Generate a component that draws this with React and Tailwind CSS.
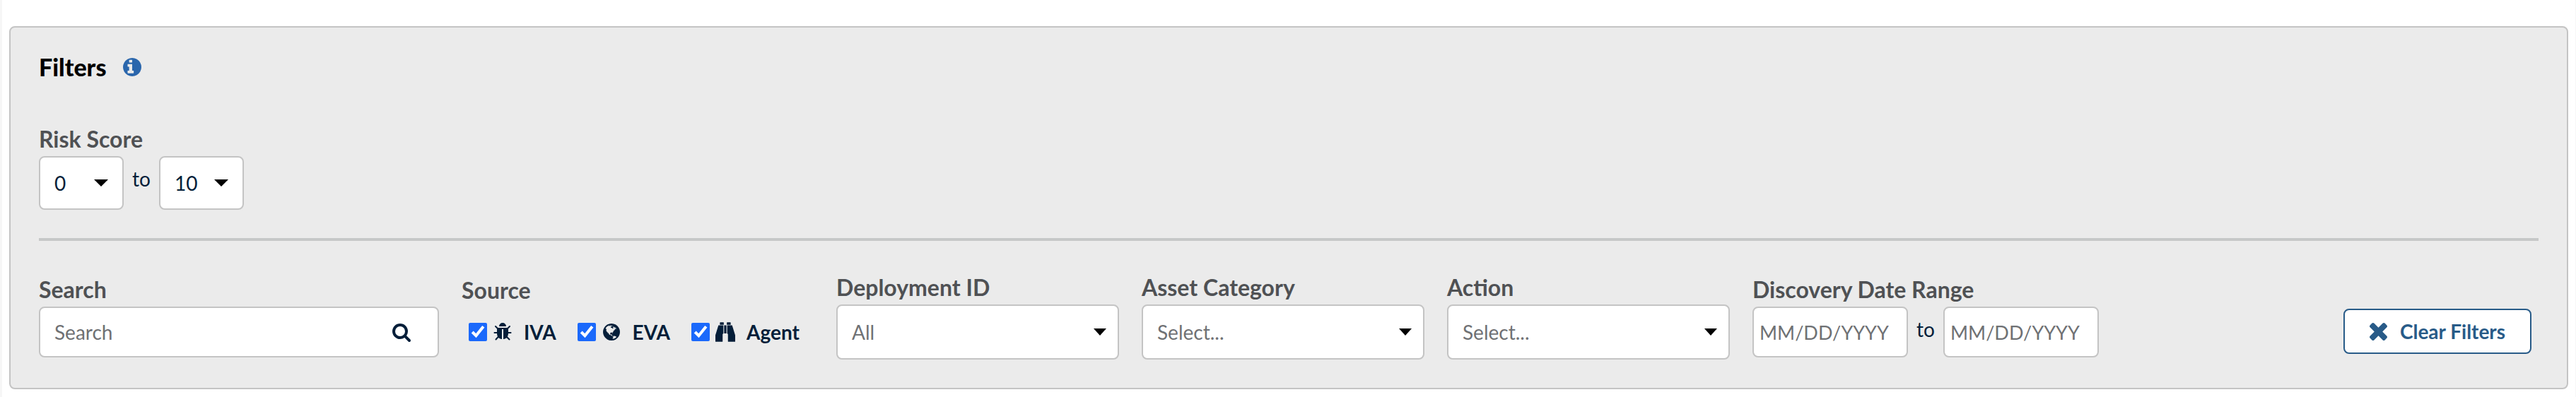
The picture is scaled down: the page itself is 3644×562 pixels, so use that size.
import React, { useState } from 'react';

const icons = {
  info: 'M1024 1376v-160q0-14-9-23t-23-9h-96v-512q0-14-9-23t-23-9h-320q-14 0-23 9t-9 23v160q0 14 9 23t23 9h96v320h-96q-14 0-23 9t-9 23v160q0 14 9 23t23 9h448q14 0 23-9t9-23zM896 480v-160q0-14-9-23t-23-9h-192q-14 0-23 9t-9 23v160q0 14 9 23t23 9h192q14 0 23-9t9-23zM1664 896q0 209-103 385.5t-279.5 279.5-385.5 103-385.5-103-279.5-279.5-103-385.5 103-385.5 279.5-279.5 385.5-103 385.5 103 279.5 279.5 103 385.5z',
  times: 'M1490 1322q0 40-28 68l-136 136q-28 28-68 28t-68-28l-294-294-294 294q-28 28-68 28t-68-28l-136-136q-28-28-28-68t28-68l294-294-294-294q-28-28-28-68t28-68l136-136q28-28 68-28t68 28l294 294 294-294q28-28 68-28t68 28l136 136q28 28 28 68t-28 68l-294 294 294 294q28 28 28 68z',
  search: 'M1216 832q0-185-131.5-316.5t-316.5-131.5-316.5 131.5-131.5 316.5 131.5 316.5 316.5 131.5 316.5-131.5 131.5-316.5zm512 832q0 52-38 90t-90 38q-54 0-90-38l-343-342q-179 124-399 124-143 0-273.5-55.5t-225-150-150-225-55.5-273.5 55.5-273.5 150-225 225-150 273.5-55.5 273.5 55.5 225 150 150 225 55.5 273.5q0 220-124 399l343 343q37 37 37 90z',
  bug: 'M1696 960q0 26-19 45t-45 19h-224q0 171-67 290l208 209q19 19 19 45t-19 45q-18 19-45 19t-45-19l-198-197q-5 5-15 13t-42 28.5-65 36.5-82 29-97 13v-896h-128v896q-51 0-101.5-13.5t-87-33-66-39-43.5-32.5l-15-14-183 207q-20 21-48 21-24 0-43-16-19-18-20.5-44.5t15.5-46.5l202-227q-58-114-58-274h-224q-26 0-45-19t-19-45 19-45 45-19h224v-294l-173-173q-19-19-19-45t19-45 45-19 45 19l173 173h844l173-173q19-19 45-19t45 19 19 45-19 45l-173 173v294h224q26 0 45 19t19 45zm-480-576h-640q0-133 93.5-226.5t226.5-93.5 226.5 93.5 93.5 226.5z',
  globe: 'M896 128q209 0 385.5 103t279.5 279.5 103 385.5-103 385.5-279.5 279.5-385.5 103-385.5-103-279.5-279.5-103-385.5 103-385.5 279.5-279.5 385.5-103zm274 521q-2 1-9.5 9.5t-13.5 9.5q2 0 4.5-5t5-11 3.5-7q6-7 22-15 14-6 52-12 34-8 51 11-2-2 9.5-13t14.5-12q3-2 15-4.5t15-7.5l2-22q-12 1-17.5-7t-6.5-21q0 2-6 8 0-7-4.5-8t-11.5 1-9 1q-10-3-15-7.5t-8-16.5-4-15q-2-5-9.5-11t-9.5-10q-1-2-2.5-5.5t-3-6.5-4-5.5-5.5-2.5-7 5-7.5 10-4.5 5q-3-2-6-1.5t-4.5 1-4.5 3-5 3.5q-3 2-8.5 3t-8.5 2q15-5-1-11-10-4-16-3 9-4 7.5-12t-8.5-14h5q-1-4-8.5-8.5t-17.5-8.5-13-6q-8-5-34-9.5t-33-.5q-5 6-4.5 10.5t4 14 3.5 12.5q1 6-5.5 13t-6.5 12q0 7 14 15.5t10 21.5q-3 8-16 16t-16 12q-5 8-1.5 18.5t10.5 16.5q2 2 1.5 4t-3.5 4.5-5.5 4-6.5 3.5l-3 2q-11 5-20.5-6t-13.5-26q-7-25-16-30-23-8-29 1-5-13-41-26-25-9-58-4 6-1 0-15-7-15-19-12 3-6 4-17.5t1-13.5q3-13 12-23 1-1 7-8.5t9.5-13.5.5-6q35 4 50-11 5-5 11.5-17t10.5-17q9-6 14-5.5t14.5 5.5 14.5 5q14 1 15.5-11t-7.5-20q12 1 3-17-4-7-8-9-12-4-27 5-8 4 2 8-1-1-9.5 10.5t-16.5 17.5-16-5q-1-1-5.5-13.5t-9.5-13.5q-8 0-16 15 3-8-11-15t-24-8q19-12-8-27-7-4-20.5-5t-19.5 4q-5 7-5.5 11.5t5 8 10.5 5.5 11.5 4 8.5 3q14 10 8 14-2 1-8.5 3.5t-11.5 4.5-6 4q-3 4 0 14t-2 14q-5-5-9-17.5t-7-16.5q7 9-25 6l-10-1q-4 0-16 2t-20.5 1-13.5-8q-4-8 0-20 1-4 4-2-4-3-11-9.5t-10-8.5q-46 15-94 41 6 1 12-1 5-2 13-6.5t10-5.5q34-14 42-7l5-5q14 16 20 25-7-4-30-1-20 6-22 12 7 12 5 18-4-3-11.5-10t-14.5-11-15-5q-16 0-22 1-146 80-235 222 7 7 12 8 4 1 5 9t2.5 11 11.5-3q9 8 3 19 1-1 44 27 19 17 21 21 3 11-10 18-1-2-9-9t-9-4q-3 5 .5 18.5t10.5 12.5q-7 0-9.5 16t-2.5 35.5-1 23.5l2 1q-3 12 5.5 34.5t21.5 19.5q-13 3 20 43 6 8 8 9 3 2 12 7.5t15 10 10 10.5q4 5 10 22.5t14 23.5q-2 6 9.5 20t10.5 23q-1 0-2.5 1t-2.5 1q3 7 15.5 14t15.5 13q1 3 2 10t3 11 8 2q2-20-24-62-15-25-17-29-3-5-5.5-15.5t-4.5-14.5q2 0 6 1.5t8.5 3.5 7.5 4 2 3q-3 7 2 17.5t12 18.5 17 19 12 13q6 6 14 19.5t0 13.5q9 0 20 10.5t17 19.5q5 8 8 26t5 24q2 7 8.5 13.5t12.5 9.5l16 8 13 7q5 2 18.5 10.5t21.5 11.5q10 4 16 4t14.5-2.5 13.5-3.5q15-2 29 15t21 21q36 19 55 11-2 1 .5 7.5t8 15.5 9 14.5 5.5 8.5q5 6 18 15t18 15q6-4 7-9-3 8 7 20t18 10q14-3 14-32-31 15-49-18 0-1-2.5-5.5t-4-8.5-2.5-8.5 0-7.5 5-3q9 0 10-3.5t-2-12.5-4-13q-1-8-11-20t-12-15q-5 9-16 8t-16-9q0 1-1.5 5.5t-1.5 6.5q-13 0-15-1 1-3 2.5-17.5t3.5-22.5q1-4 5.5-12t7.5-14.5 4-12.5-4.5-9.5-17.5-2.5q-19 1-26 20-1 3-3 10.5t-5 11.5-9 7q-7 3-24 2t-24-5q-13-8-22.5-29t-9.5-37q0-10 2.5-26.5t3-25-5.5-24.5q3-2 9-9.5t10-10.5q2-1 4.5-1.5t4.5 0 4-1.5 3-6q-1-1-4-3-3-3-4-3 7 3 28.5-1.5t27.5 1.5q15 11 22-2 0-1-2.5-9.5t-.5-13.5q5 27 29 9 3 3 15.5 5t17.5 5q3 2 7 5.5t5.5 4.5 5-.5 8.5-6.5q10 14 12 24 11 40 19 44 7 3 11 2t4.5-9.5 0-14-1.5-12.5l-1-8v-18l-1-8q-15-3-18.5-12t1.5-18.5 15-18.5q1-1 8-3.5t15.5-6.5 12.5-8q21-19 15-35 7 0 11-9-1 0-5-3t-7.5-5-4.5-2q9-5 2-16 5-3 7.5-11t7.5-10q9 12 21 2 7-8 1-16 5-7 20.5-10.5t18.5-9.5q7 2 8-2t1-12 3-12q4-5 15-9t13-5l17-11q3-4 0-4 18 2 31-11 10-11-6-20 3-6-3-9.5t-15-5.5q3-1 11.5-.5t10.5-1.5q15-10-7-16-17-5-43 12zm-163 877q206-36 351-189-3-3-12.5-4.5t-12.5-3.5q-18-7-24-8 1-7-2.5-13t-8-9-12.5-8-11-7q-2-2-7-6t-7-5.5-7.5-4.5-8.5-2-10 1l-3 1q-3 1-5.5 2.5t-5.5 3-4 3 0 2.5q-21-17-36-22-5-1-11-5.5t-10.5-7-10-1.5-11.5 7q-5 5-6 15t-2 13q-7-5 0-17.5t2-18.5q-3-6-10.5-4.5t-12 4.5-11.5 8.5-9 6.5-8.5 5.5-8.5 7.5q-3 4-6 12t-5 11q-2-4-11.5-6.5t-9.5-5.5q2 10 4 35t5 38q7 31-12 48-27 25-29 40-4 22 12 26 0 7-8 20.5t-7 21.5q0 6 2 16z',
  binoculars: 'M320 384h416v672l-64 64v608q0 32-32 32h-544q-32 0-32-32v-512zM1472 384h-416v672l64 64v608q0 32 32 32h544q32 0 32-32v-512zM800 384h192v672h-192zM442 160q0-32 32-32h262q32 0 32 32v176h-326zM1024 160q0-32 32-32h262q32 0 32 32v176h-326z',
};

const Icon = ({ name, className, viewBox = '0 0 1792 1792' }) => (
  <svg aria-hidden="true" viewBox={viewBox} fill="currentColor" className={className}>
    <path d={icons[name]} />
  </svg>
);

const Caret = ({ className }) => (
  <svg
    aria-hidden="true"
    viewBox="0 0 20 10"
    preserveAspectRatio="none"
    className={`pointer-events-none absolute top-1/2 h-[10px] -translate-y-1/2 ${className}`}
  >
    <path d="M0 0h20L10 10z" />
  </svg>
);

const ScoreSelect = ({ label, value, onChange }) => (
  <div className="relative">
    <select
      aria-label={label}
      value={value}
      onChange={(e) => onChange(e.target.value)}
      className="block h-[76px] w-[120px] appearance-none rounded-lg border-2 border-[#c4c4c4] bg-white pl-5 text-[28px] text-[#041e39]"
    >
      {[0, 1, 2, 3, 4, 5, 6, 7, 8, 9, 10].map((score) => (
        <option key={score}>{score}</option>
      ))}
    </select>
    <Caret className="right-[22px] w-5" />
  </div>
);

const FilterSelect = ({ id, label, placeholder }) => (
  <div className="flex flex-col gap-1">
    <label htmlFor={id} className="text-[32px] leading-10 font-bold text-[#4f5154]">
      {label}
    </label>
    <div className="relative">
      <select
        id={id}
        className="block h-[78px] w-[400px] appearance-none rounded-lg border-2 border-[#c4c4c4] bg-white pl-5 text-[28px] text-[#6f7174]"
      >
        <option>{placeholder}</option>
      </select>
      <Caret className="right-[18px] w-[18px]" />
    </div>
  </div>
);

const SourceCheckbox = ({ label, icon, viewBox, checked, onChange }) => (
  <label className="flex items-center">
    <input
      type="checkbox"
      checked={checked}
      onChange={onChange}
      className="mr-2 size-[26px] accent-[#1b69fb]"
    />
    <Icon name={icon} viewBox={viewBox} className="mr-4 size-7" />
    <span className="text-[28px] leading-10 font-bold">{label}</span>
  </label>
);

const DateInput = ({ id, label }) => (
  <input
    id={id}
    aria-label={label}
    type="text"
    placeholder="MM/DD/YYYY"
    className="h-[72px] w-[220px] rounded-lg border-2 border-[#c4c4c4] bg-white px-2 text-[27px] placeholder:text-[#6f7174]"
  />
);

const App = () => {
  const [minScore, setMinScore] = useState('0');
  const [maxScore, setMaxScore] = useState('10');
  const [sources, setSources] = useState({ iva: true, eva: true, agent: true });

  const toggleSource = (key) => {
    setSources({ ...sources, [key]: !sources[key] });
  };

  return (
    <div className="border-r border-l-3 border-[#f6f6f6] bg-white px-[10px] pt-[37px] pb-[11px] font-['Lato',sans-serif] text-[#041e39]">
      <section className="rounded-lg border-2 border-[#c4c4c4] bg-[#ebebeb] px-10 pt-9 pb-10">
        <div className="flex items-center gap-6">
          <h2 className="text-[34px] leading-10 font-black text-black">Filters</h2>
          <Icon name="info" viewBox="128 128 1536 1536" className="size-[26px] text-[#2a66ac]" />
        </div>

        {/* Risk score */}
        <fieldset className="mt-[62px]">
          <legend className="mb-1 text-[32px] leading-10 font-bold text-[#4f5154]">Risk Score</legend>
          <div className="flex">
            <ScoreSelect label="Minimum risk score" value={minScore} onChange={setMinScore} />
            <span className="w-[50px] pt-3 text-center text-[28px] leading-10">to</span>
            <ScoreSelect label="Maximum risk score" value={maxScore} onChange={setMaxScore} />
          </div>
        </fieldset>

        <hr className="mt-10 mb-[46px] border-t-4 border-[#c6c8c8]" />

        <div className="flex items-center gap-8">
          {/* Search */}
          <div className="flex flex-col gap-1">
            <label htmlFor="search" className="text-[32px] leading-10 font-bold text-[#4f5154]">
              Search
            </label>
            <div className="relative">
              <input
                id="search"
                type="text"
                placeholder="Search"
                className="block h-[72px] w-[566px] rounded-lg border-2 border-[#c4c4c4] bg-white pr-20 pl-5 text-[28px] placeholder:text-[#6f7174]"
              />
              <Icon
                name="search"
                viewBox="64 128 1664 1664"
                className="pointer-events-none absolute top-6 right-10 size-[26px]"
              />
            </div>
          </div>

          {/* Source */}
          <fieldset className="w-[498px]">
            <legend className="text-[32px] leading-10 font-bold text-[#4f5154]">Source</legend>
            <div className="flex h-[74px] items-center gap-[30px] pt-1 pl-[10px]">
              <SourceCheckbox
                label="IVA"
                icon="bug"
                checked={sources.iva}
                onChange={() => toggleSource('iva')}
              />
              <SourceCheckbox
                label="EVA"
                icon="globe"
                checked={sources.eva}
                onChange={() => toggleSource('eva')}
              />
              <SourceCheckbox
                label="Agent"
                icon="binoculars"
                viewBox="64 112 1664 1664"
                checked={sources.agent}
                onChange={() => toggleSource('agent')}
              />
            </div>
          </fieldset>

          <FilterSelect id="deployment" label="Deployment ID" placeholder="All" />
          <FilterSelect id="category" label="Asset Category" placeholder="Select..." />
          <FilterSelect id="action" label="Action" placeholder="Select..." />

          {/* Discovery date */}
          <div className="flex flex-col gap-1">
            <label htmlFor="date-from" className="text-[32px] leading-10 font-bold text-[#4f5154]">
              Discovery Date Range
            </label>
            <div className="flex">
              <DateInput id="date-from" label="Discovery date from" />
              <span className="w-[50px] pt-3 text-center text-[28px] leading-10">to</span>
              <DateInput id="date-to" label="Discovery date to" />
            </div>
          </div>

          <button
            type="button"
            className="mr-[10px] mb-2 ml-auto flex h-16 w-[266px] items-center justify-center gap-[18px] self-end rounded-lg border-2 border-[#285b88] bg-white text-[28px] font-bold text-[#285b88]"
          >
            <Icon name="times" viewBox="302 366 1188 1188" className="size-[25px]" />
            Clear Filters
          </button>
        </div>
      </section>
    </div>
  );
};

export default App;
